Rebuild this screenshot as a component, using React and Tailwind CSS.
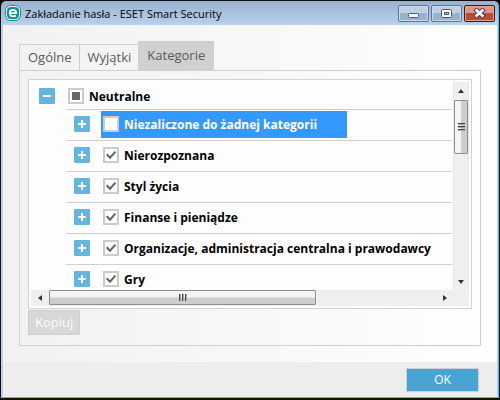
import React, { useState } from 'react';

const tabs = ['Ogólne', 'Wyjątki', 'Kategorie'];

const initialCategories = [
  { id: 'uncategorized', name: 'Niezaliczone do żadnej kategorii', checked: false },
  { id: 'unknown', name: 'Nierozpoznana', checked: true },
  { id: 'lifestyle', name: 'Styl życia', checked: true },
  { id: 'finance', name: 'Finanse i pieniądze', checked: true },
  { id: 'organizations', name: 'Organizacje, administracja centralna i prawodawcy', checked: true },
  { id: 'games', name: 'Gry', checked: true }
];

const EsetLogo = () => (
  <svg viewBox="0 0 16 16" className="h-4 w-4 shrink-0" aria-hidden="true">
    <rect x="0.5" y="0.5" width="15" height="15" rx="5" fill="#f4fbfb" stroke="#0b8a93" />
    <rect x="2" y="2" width="12" height="12" rx="4" fill="#0b9099" />
    <path d="M4.700 8.200h6.600c0-2.200-1.300-3.400-3.300-3.400S4.700 6.100 4.700 8.100c0 2.100 1.400 3.300 3.500 3.300 1.200 0 2-.3 2.800-.9" fill="none" stroke="#fff" strokeWidth="1.800" />
  </svg>
);

const WindowButtons = () => {
  const base = 'flex h-[17px] w-[31px] items-center justify-center rounded-[2px] border';
  const blue = 'border-[#5f7593] bg-linear-to-b from-[#bdd0e6] from-50% to-[#98b3d0] to-50% shadow-[inset_0_0_0_1px_#c9daec]';

  return (
    <div className="flex gap-[2px]">
      <button aria-label="Minimalizuj" className={`${base} ${blue}`}>
        <svg width="11" height="5" viewBox="0 0 11 5" className="mt-1">
          <rect x="0.5" y="0.5" width="10" height="4" rx="1" fill="#f7f7f7" stroke="#505a6c" />
        </svg>
      </button>
      <button aria-label="Maksymalizuj" className={`${base} ${blue}`}>
        <svg width="11" height="9" viewBox="0 0 11 9">
          <rect x="0.5" y="0.5" width="10" height="8" rx="1" fill="#f7f7f7" stroke="#505a6c" />
          <rect x="3.5" y="3.5" width="4" height="2" fill="#a9bfe0" stroke="#505a6c" />
        </svg>
      </button>
      <button
        aria-label="Zamknij"
        className={`${base} border-[#471520] bg-linear-to-b from-[#dd978c] from-50% to-[#bd4a33] to-50% shadow-[inset_0_0_0_1px_#e0a197]`}
      >
        <svg width="13" height="10" viewBox="0 0 13 10">
          <path d="M3.500 2.300l6 5.400M9.500 2.300l-6 5.400" stroke="#50454f" strokeWidth="4.600" strokeLinecap="square" />
          <path d="M3.500 2.300l6 5.400M9.500 2.300l-6 5.400" stroke="#f8f8f8" strokeWidth="2.600" strokeLinecap="square" />
        </svg>
      </button>
    </div>
  );
};

const Expander = ({ open, label, onClick }) => (
  <button
    onClick={onClick}
    aria-label={label}
    aria-expanded={open}
    className="flex h-4 w-4 shrink-0 items-center justify-center rounded-[1px] bg-[#66b5de]"
  >
    <svg width="8" height="8" viewBox="0 0 8 8" fill="#fff">
      <rect x="0" y="3" width="8" height="2" />
      {!open && <rect x="3" y="0" width="2" height="8" />}
    </svg>
  </button>
);

const Checkbox = ({ id, checked, mixed, onChange }) => (
  <span className="grid h-4 w-4 shrink-0">
    <input
      id={id}
      type="checkbox"
      checked={checked}
      onChange={onChange}
      className="col-start-1 row-start-1 h-4 w-4 appearance-none border-2 border-[#cbcbcb] bg-white"
    />
    {(mixed || checked) && (
      <svg viewBox="0 0 16 16" className="pointer-events-none col-start-1 row-start-1 h-4 w-4">
        {mixed ? (
          <rect x="4" y="4" width="8" height="8" fill="#666" />
        ) : (
          <path d="M3.700 7.300l3.300 3.400 5.400-6" fill="none" stroke="#636363" strokeWidth="2" />
        )}
      </svg>
    )}
  </span>
);

const Arrow = ({ points, label, className }) => (
  <button aria-label={label} className={`flex shrink-0 items-center justify-center ${className}`}>
    <svg width="8" height="8" viewBox="0 0 8 8">
      <polygon points={points} fill="#333" />
    </svg>
  </button>
);

const App = () => {
  const [activeTab, setActiveTab] = useState('Kategorie');
  const [expanded, setExpanded] = useState(true);
  const [selected, setSelected] = useState('uncategorized');
  const [categories, setCategories] = useState(initialCategories);

  const allChecked = categories.every((c) => c.checked);
  const someChecked = categories.some((c) => c.checked);

  const toggleCategory = (id) => {
    setSelected(id);
    setCategories(categories.map((c) => (c.id === id ? { ...c, checked: !c.checked } : c)));
  };

  const toggleAll = () => {
    setCategories(categories.map((c) => ({ ...c, checked: !allChecked })));
  };

  return (
    <div className="h-screen bg-black font-['Open_Sans','Noto_Sans',sans-serif] text-xs text-black">
      <div className="flex h-full flex-col overflow-hidden rounded-t-md border border-b-2 border-[#111]">
        <div className="flex min-h-0 flex-1 flex-col border-r border-b border-r-[#3fc9f0] border-b-[#27cdf5]">
          {/* Title bar */}
          <header className="flex h-6 shrink-0 items-center justify-between bg-linear-to-b from-[#97b1ce] to-[#b9d1ec] pr-[3px] pl-1">
            <div className="flex items-center gap-1">
              <EsetLogo />
              <h1 className="pt-[2px] text-[11px]">Zakładanie hasła - ESET Smart Security</h1>
            </div>
            <WindowButtons />
          </header>

          <div className="flex min-h-0 flex-1 flex-col border-r border-l-2 border-[#b9d1ea]">
            <main className="flex min-h-0 flex-1 flex-col bg-linear-to-r from-[#f1f1f1] to-[#fefefe] px-4 pt-4 pb-4">
              {/* Tabs */}
              <div role="tablist" className="flex shrink-0 items-end text-[13px] text-[#5a5a5a]">
                {tabs.map((tab) => (
                  <button
                    key={tab}
                    role="tab"
                    aria-selected={tab === activeTab}
                    onClick={() => setActiveTab(tab)}
                    className={
                      tab === activeTab
                        ? 'h-[29px] bg-[#d0d0d0] px-[9px]'
                        : 'h-[26px] border-t border-l border-[#cfcfcf] pr-[7px] pl-2'
                    }
                  >
                    {tab}
                  </button>
                ))}
              </div>

              <section className="flex min-h-0 flex-1 flex-col items-start border border-[#cfcfcf] px-2 pt-2 pb-[10px]">
                <div className="flex min-h-0 w-full flex-1 flex-col border border-[#d2d2d2] bg-[#fdfdfd] p-[2px]">
                  <div className="flex min-h-0 flex-1">
                    {/* Category tree */}
                    <div className="min-w-0 flex-1 overflow-hidden pr-px font-bold">
                      <div className="flex h-[27px] items-center pl-2">
                        <Expander open={expanded} label="Neutralne" onClick={() => setExpanded(!expanded)} />
                        <label htmlFor="neutral" className="ml-[13px] flex items-center gap-[5px]">
                          <Checkbox
                            id="neutral"
                            checked={allChecked}
                            mixed={someChecked && !allChecked}
                            onChange={toggleAll}
                          />
                          <span className="pt-[2px]">Neutralne</span>
                        </label>
                      </div>
                      {expanded && (
                        <ul className="ml-[35px]">
                          {categories.map((category) => (
                            <li key={category.id} className="flex h-[31px] items-center border-t border-[#d0d0d0] pb-[2px] pl-2">
                              <Expander open={false} label={category.name} />
                              <label
                                htmlFor={category.id}
                                className={`ml-[11px] flex h-[27px] items-center gap-[5px] pr-[30px] pl-[2px] whitespace-nowrap ${
                                  selected === category.id ? 'bg-[#3399ff] text-white' : ''
                                }`}
                              >
                                <Checkbox
                                  id={category.id}
                                  checked={category.checked}
                                  onChange={() => toggleCategory(category.id)}
                                />
                                <span className="pt-[2px]">{category.name}</span>
                              </label>
                            </li>
                          ))}
                        </ul>
                      )}
                    </div>

                    {/* Vertical scrollbar */}
                    <div className="flex w-4 shrink-0 flex-col border-x border-[#e6e6e6] bg-[#efefef]">
                      <Arrow label="Przewiń w górę" points="4,2 7,6 1,6" className="h-[18px]" />
                      <div className="flex h-[54px] flex-col items-center justify-center gap-px rounded-[1px] border border-[#8e8e8e] bg-linear-to-r from-[#f4f4f4] from-45% to-[#cdcdd1] to-55%">
                        <span className="h-[2px] w-[7px] border-t border-[#444] bg-[#aaa]"></span>
                        <span className="h-[2px] w-[7px] border-t border-[#444] bg-[#aaa]"></span>
                        <span className="h-[2px] w-[7px] border-t border-[#444] bg-[#aaa]"></span>
                      </div>
                      <div className="flex-1"></div>
                      <Arrow label="Przewiń w dół" points="1,2 7,2 4,6" className="h-[17px]" />
                    </div>
                  </div>

                  {/* Horizontal scrollbar */}
                  <div className="flex h-4 shrink-0 bg-[#efefef] pr-4">
                    <Arrow label="Przewiń w lewo" points="6,1 6,7 2,4" className="w-[18px]" />
                    <div className="min-w-0 flex-1">
                      <div className="flex h-[15px] w-[69%] items-center justify-center gap-px rounded-[1px] border border-[#8e8e8e] bg-linear-to-b from-[#f4f4f4] from-45% to-[#cdcdd1] to-55%">
                        <span className="h-[7px] w-[2px] border-l border-[#444] bg-[#aaa]"></span>
                        <span className="h-[7px] w-[2px] border-l border-[#444] bg-[#aaa]"></span>
                        <span className="h-[7px] w-[2px] border-l border-[#444] bg-[#aaa]"></span>
                      </div>
                    </div>
                    <Arrow label="Przewiń w prawo" points="2,1 2,7 6,4" className="w-[17px]" />
                  </div>
                </div>

                <button
                  disabled
                  className="mt-px h-[25px] shrink-0 border border-[#cfcfcf] bg-[#d6d7d9] px-[6px] text-[13px] text-[#fbfbfb]"
                >
                  Kopiuj
                </button>
              </section>
            </main>

            <footer className="flex h-[35px] shrink-0 items-center justify-end bg-[#ededed] pr-[18px]">
              <button className="h-6 w-[73px] border border-[#c9d3da] bg-[#49a3d3] text-xs text-white">OK</button>
            </footer>
          </div>
        </div>
      </div>
    </div>
  );
};

export default App;
